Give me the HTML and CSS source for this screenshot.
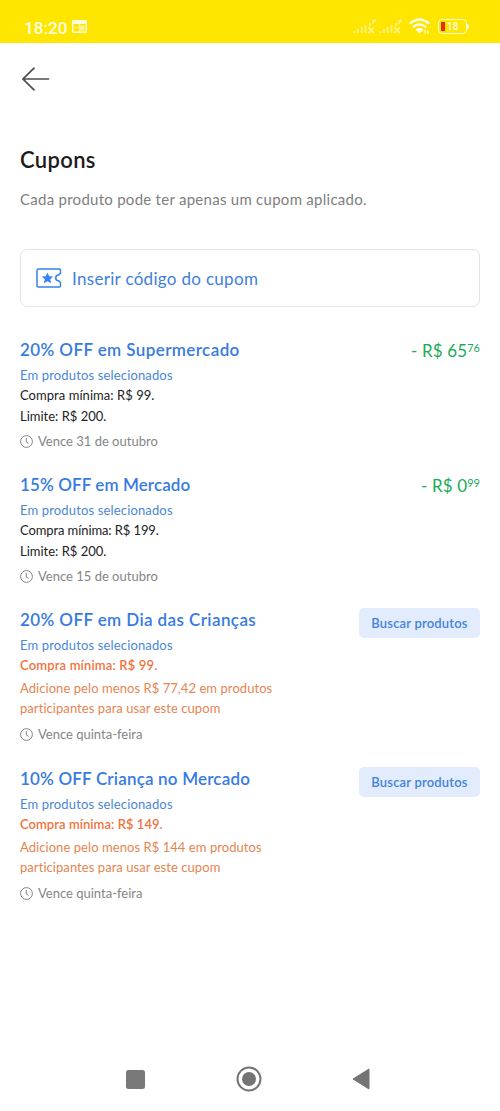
FILE: index.html
```html
<!DOCTYPE html>
<html lang="pt-BR">
<head>
<meta charset="utf-8">
<title>Cupons</title>
<link rel="stylesheet" href="styles.css">
</head>
<body>
<svg class="defs" width="0" height="0" aria-hidden="true">
  <symbol id="clock" viewBox="0 0 13 13"><g fill="none" stroke="#858585" stroke-width="1"><circle cx="6.5" cy="6.5" r="5.9"/><path d="M6.3 3v4l2.3 1.4"/></g></symbol>
  <symbol id="signal" viewBox="0 0 24 16"><path d="M1.500 15v-2M5 15v-4M8.700 15v-6M12.500 15v-8M17 8v-3M20 6v-4M22 4V1.500M15.500 9.500l5.500 5.500M21 9.500l-5.500 5.500" fill="none" stroke="#fff" stroke-opacity=".5" stroke-width="1.800"/></symbol>
</svg>
<header class="status">
  <span class="time">18:20</span>
  <svg class="news" width="15" height="13" viewBox="0 0 15 13"><rect x=".7" y=".7" width="13.600" height="11.600" rx="1" fill="none" stroke="#fffce0" stroke-width="1.400"/><path d="M0 1h15v3H0z" fill="#fffce0"/><path d="M2 7.500h5M7.500 4v8" stroke="#fffce0" stroke-opacity=".7"/><path d="M8 5.500h4.500v5H8z" fill="#fffce0" fill-opacity=".65"/></svg>
  <div class="status-icons">
    <svg width="24" height="16"><use href="#signal"/></svg>
    <svg width="24" height="16"><use href="#signal"/></svg>
    <svg class="wifi" width="22" height="17" viewBox="0 0 22 17"><g fill="none" stroke="#fffef0" stroke-width="2.200"><path d="M.8 5.800Q10.500-2.800 20.200 5.800M4 9.200q6.500-5.600 13 0M7.200 12.400q3.300-2.800 6.600 0"/></g><path d="M8.300 13.200q2.200-1.700 4.400 0L10.500 15.600z" fill="#fffef0"/><path d="M16.200 16v-3.500l-1.200 1.200M18.800 12v3.500l1.200-1.200" fill="none" stroke="#fffef0" stroke-width="1"/></svg>
    <div class="battery"><i></i><b>18</b></div>
  </div>
</header>
<nav class="back">
  <svg width="28" height="24" viewBox="0 0 28 24" fill="none" stroke="#4d4d4d" stroke-width="1.700" stroke-linecap="round"><path d="M12 1.200L1 12l11 10.800M1.500 12H26.500"/></svg>
</nav>
<main>
  <h1>Cupons</h1>
  <p class="intro">Cada produto pode ter apenas um cupom aplicado.</p>
  <div class="code">
    <svg width="26" height="20" viewBox="0 0 26 20"><path d="M2.500 1h20.800q1.200 0 1.200 1.200v3.300c-1 0-1 1-1.600 1.300-2 .4-3.200 1.500-3.200 3.100s1.200 2.700 3.200 3.100c.6.300.6 1.300 1.600 1.300v3.500q0 1.200-1.200 1.200H2.500Q1 19 1 17.500v-15Q1 1 2.500 1z" fill="none" stroke="#3483e6" stroke-width="1.500" stroke-linejoin="round"/><path d="M11.500 4.500l1.700 3.700 4 .4-3 2.700.9 4-3.600-2.100-3.600 2.100.9-4-3-2.700 4-.4z" fill="#3483fa"/></svg>
    <span>Inserir código do cupom</span>
  </div>
  <section class="coupon">
    <div class="info">
      <h2 class="t1">20% OFF em Supermercado</h2>
      <p class="scope">Em produtos selecionados</p>
      <p class="min">Compra mínima: R$ 99.</p>
      <p class="limit">Limite: R$ 200.</p>
      <p class="due"><svg width="13" height="13"><use href="#clock"/></svg>Vence 31 de outubro</p>
    </div>
    <div class="amount">- R$ 65<small>76</small></div>
  </section>
  <section class="coupon">
    <div class="info">
      <h2 class="t2">15% OFF em Mercado</h2>
      <p class="scope">Em produtos selecionados</p>
      <p class="min tight">Compra mínima: R$ 199.</p>
      <p class="limit">Limite: R$ 200.</p>
      <p class="due"><svg width="13" height="13"><use href="#clock"/></svg>Vence 15 de outubro</p>
    </div>
    <div class="amount">- R$ 0<small>99</small></div>
  </section>
  <section class="coupon pending">
    <div class="info">
      <h2 class="t1">20% OFF em Dia das Crianças</h2>
      <p class="scope">Em produtos selecionados</p>
      <p class="min warn">Compra mínima: R$ 99.</p>
      <p class="hint">Adicione pelo menos R$ 77,42 em produtos<br>participantes para usar este cupom</p>
      <p class="due"><svg width="13" height="13"><use href="#clock"/></svg>Vence quinta-feira</p>
    </div>
    <button class="search">Buscar produtos</button>
  </section>
  <section class="coupon pending">
    <div class="info">
      <h2 class="t4">10% OFF Criança no Mercado</h2>
      <p class="scope">Em produtos selecionados</p>
      <p class="min warn tight">Compra mínima: R$ 149.</p>
      <p class="hint">Adicione pelo menos R$ 144 em produtos<br>participantes para usar este cupom</p>
      <p class="due"><svg width="13" height="13"><use href="#clock"/></svg>Vence quinta-feira</p>
    </div>
    <button class="search">Buscar produtos</button>
  </section>
</main>
<footer class="system">
  <svg width="19" height="19"><rect width="19" height="19" rx="2.500" fill="#787878"/></svg>
  <svg width="26" height="26" viewBox="0 0 26 26"><circle cx="13" cy="13" r="11.500" fill="none" stroke="#747474" stroke-width="2"/><circle cx="13" cy="13" r="7" fill="#747474"/></svg>
  <svg width="18" height="22" viewBox="0 0 18 22"><path d="M1 11L17 1v20z" fill="#747474" stroke="#747474" stroke-linejoin="round"/></svg>
</footer>
</body>
</html>
```
FILE: styles.css
```css
* { box-sizing: border-box; }
body { margin: 0; width: 500px; height: 1111px; display: flex; flex-direction: column; background: #fff; font-family: Lato, "Open Sans", sans-serif; font-variant-ligatures: none; color: #222; overflow: hidden; }
h1, h2, p { margin: 0; white-space: nowrap; }
svg { display: block; flex: none; }
.defs { position: absolute; }
.status { height: 43px; background: #ffe600; display: flex; padding: 0 30px 0 24px; color: #fffce0; }
.time { font: 500 17.2px/20px Roboto, sans-serif; padding-top: 18px; width: 48px; }
.news { margin-top: 20px; }
.status-icons { margin-left: auto; display: flex; gap: 2px; padding-top: 18px; }
.wifi { margin-left: 4px; }
.battery { position: relative; width: 29px; height: 15px; margin: 1px 3px 0 5px; border: 1.5px solid #fffdd8; border-radius: 4px; display: flex; align-items: center; padding-left: 2px; }
.battery::after { content: ""; position: absolute; left: 28px; top: 4px; width: 2px; height: 5px; background: #fffdd8; border-radius: 0 2px 2px 0; }
.battery i { width: 4px; height: 9px; background: #e62b00; }
.battery b { font: 500 10px/11px Roboto, sans-serif; margin-left: 2px; }
.back { height: 68px; padding: 24px 0 0 22px; }
main { flex: 1; padding: 34px 20px 0; }
h1 { font-size: 22px; line-height: 28px; font-weight: 600; letter-spacing: .35px; color: #1b1b1b; padding-top: 1px; height: 28px; }
.intro { margin-top: 15px; font-size: 15px; line-height: 22px; letter-spacing: .27px; color: #808080; }
.code { margin-top: 39px; height: 58px; border: 1px solid #e4e4e4; border-radius: 7px; display: flex; align-items: center; gap: 10px; padding-left: 15px; color: #3e80dc; font-size: 17px; letter-spacing: .31px; }
.code + .coupon { margin-top: 31px; }
.coupon { display: flex; justify-content: space-between; height: 135px; font-size: 13px; line-height: 20.25px; }
.pending { height: 159px; }
h2 { font-size: 17px; line-height: 24px; margin-bottom: 3px; font-weight: 600; color: #377be0; }
.t1 { letter-spacing: .4px; }
.t2 { letter-spacing: .1px; }
.t4 { letter-spacing: .18px; }
.scope { color: #4a87d5; letter-spacing: .15px; }
.min { letter-spacing: .05px; }
.tight { letter-spacing: -.1px; }
.warn { color: #f0733d; font-weight: 600; letter-spacing: .16px; }
.warn.tight { letter-spacing: .05px; }
.hint { color: #e58550; line-height: 20px; margin-top: 2px; letter-spacing: .06px; }
.due { display: flex; align-items: center; gap: 5px; margin-top: 5px; line-height: 20px; color: #858585; }
.due svg { margin-top: 2px; }
.pending .due { margin-top: 6px; }
.amount { font-size: 17px; line-height: 26px; letter-spacing: .15px; color: #1caa57; white-space: nowrap; display: flex; }
.amount small { font-size: 11px; line-height: 20px; letter-spacing: 0; }
.search { width: 121px; height: 30px; border: 0; padding: 0; border-radius: 5px; background: #e2ecfc; color: #4282de; font: 600 13px/30px Lato, sans-serif; letter-spacing: .18px; white-space: nowrap; }
.system { height: 63px; padding: 0 130px 1px 126px; display: flex; justify-content: space-between; align-items: center; }
```
